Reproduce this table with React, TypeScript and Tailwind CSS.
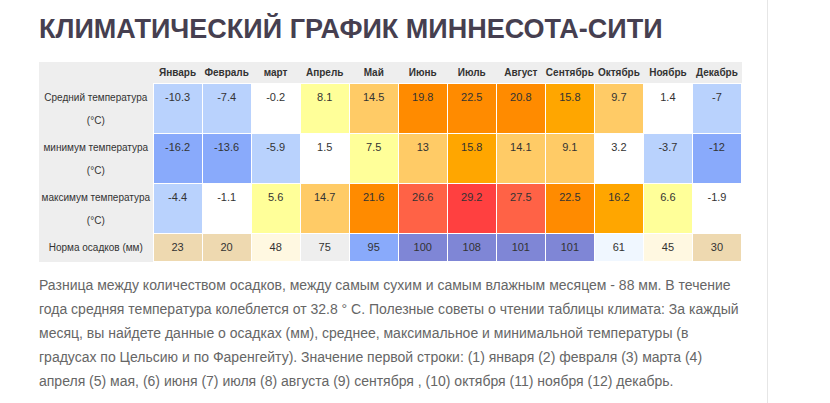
import React from 'react';

const months = [
  'Январь', 'Февраль', 'март', 'Апрель', 'Май', 'Июнь',
  'Июль', 'Август', 'Сентябрь', 'Октябрь', 'Ноябрь', 'Декабрь',
];

type Cell = [string, string];

// цвета ячеек как на исходной странице
const LB = 'bg-[#b9d2fd]';
const MB = 'bg-[#89aafb]';
const W = 'bg-white';
const Y = 'bg-[#ffff99]';
const LO = 'bg-[#ffcb66]';
const O = 'bg-[#ff8b00]';
const A = 'bg-[#ffa600]';
const T = 'bg-[#ff6246]';
const R = 'bg-[#ff4040]';

const rows: { label: string; unit?: string; cells: Cell[] }[] = [
  {
    label: 'Средний температура',
    unit: '(°C)',
    cells: [
      ['-10.3', LB], ['-7.4', LB], ['-0.2', W], ['8.1', Y], ['14.5', LO], ['19.8', O],
      ['22.5', O], ['20.8', O], ['15.8', A], ['9.7', LO], ['1.4', W], ['-7', LB],
    ],
  },
  {
    label: 'минимум температура',
    unit: '(°C)',
    cells: [
      ['-16.2', MB], ['-13.6', MB], ['-5.9', LB], ['1.5', W], ['7.5', Y], ['13', LO],
      ['15.8', A], ['14.1', LO], ['9.1', LO], ['3.2', W], ['-3.7', LB], ['-12', MB],
    ],
  },
  {
    label: 'максимум температура',
    unit: '(°C)',
    cells: [
      ['-4.4', LB], ['-1.1', W], ['5.6', Y], ['14.7', LO], ['21.6', O], ['26.6', T],
      ['29.2', R], ['27.5', T], ['22.5', O], ['16.2', A], ['6.6', Y], ['-1.9', W],
    ],
  },
  {
    label: 'Норма осадков (мм)',
    cells: [
      ['23', 'bg-[#eed9b0]'], ['20', 'bg-[#eed9b0]'], ['48', 'bg-[#fff8e1]'], ['75', 'bg-[#eeeeee]'],
      ['95', 'bg-[#89aafb]'], ['100', 'bg-[#7f86d6]'], ['108', 'bg-[#7f86d6]'], ['101', 'bg-[#7f86d6]'],
      ['101', 'bg-[#7f86d6]'], ['61', 'bg-[#f0f7ff]'], ['45', 'bg-[#fff8e1]'], ['30', 'bg-[#eed9b0]'],
    ],
  },
];

const ClimateTable = () => (
  <table className="w-[703px] table-fixed border-collapse bg-[#eeeeee] text-[11px] text-[#333]">
    <colgroup>
      <col className="w-[114px]" />
      {months.map((m) => (
        <col key={m} className="w-[49px]" />
      ))}
    </colgroup>
    <thead>
      <tr className="h-[21px]">
        <th />
        {months.map((m) => (
          <th key={m} className="whitespace-nowrap p-0 text-center text-[10px] font-bold leading-[21px]">
            {m}
          </th>
        ))}
      </tr>
    </thead>
    <tbody>
      {rows.map((row) => (
        <tr key={row.label}>
          <td className="px-0 pt-[2px] pb-[2px] text-center align-top text-[10px] leading-[23px]">
            <div className="whitespace-nowrap">{row.label}</div>
            {row.unit && <div>{row.unit}</div>}
          </td>
          {row.cells.map(([v, bg], i) => (
            <td
              key={i}
              className={`${bg} border border-white px-0 pt-[2px] pb-[2px] text-center align-top leading-[23px]`}
            >
              {v}
            </td>
          ))}
        </tr>
      ))}
    </tbody>
  </table>
);

export default function App() {
  return (
    <div className="flex min-h-[403px] bg-white font-['Liberation_Sans',Arial,sans-serif]">
      <main className="w-[768px] border-r border-[#e6e6e6] pl-[39px] pr-[26px]">
        <h1 className="pt-[13px] text-[27px] font-bold leading-[32px] text-[#463f50]">
          КЛИМАТИЧЕСКИЙ ГРАФИК МИННЕСОТА-СИТИ
        </h1>
        <div className="mt-[17px]">
          <ClimateTable />
        </div>
        <p className="mt-[11px] text-[14px] leading-[24px] text-[#666]">
          Разница между количеством осадков, между самым сухим и самым влажным месяцем - 88 мм. В течение
          года средняя температура колеблется от 32.8 ° C. Полезные советы о чтении таблицы климата: За каждый
          месяц, вы найдете данные о осадках (мм), среднее, максимальное и минимальной температуры (в
          градусах по Цельсию и по Фаренгейту). Значение первой строки: (1) января (2) февраля (3) марта (4)
          апреля (5) мая, (6) июня (7) июля (8) августа (9) сентября , (10) октября (11) ноября (12) декабрь.
        </p>
      </main>
      <div className="flex-1" />
    </div>
  );
}
